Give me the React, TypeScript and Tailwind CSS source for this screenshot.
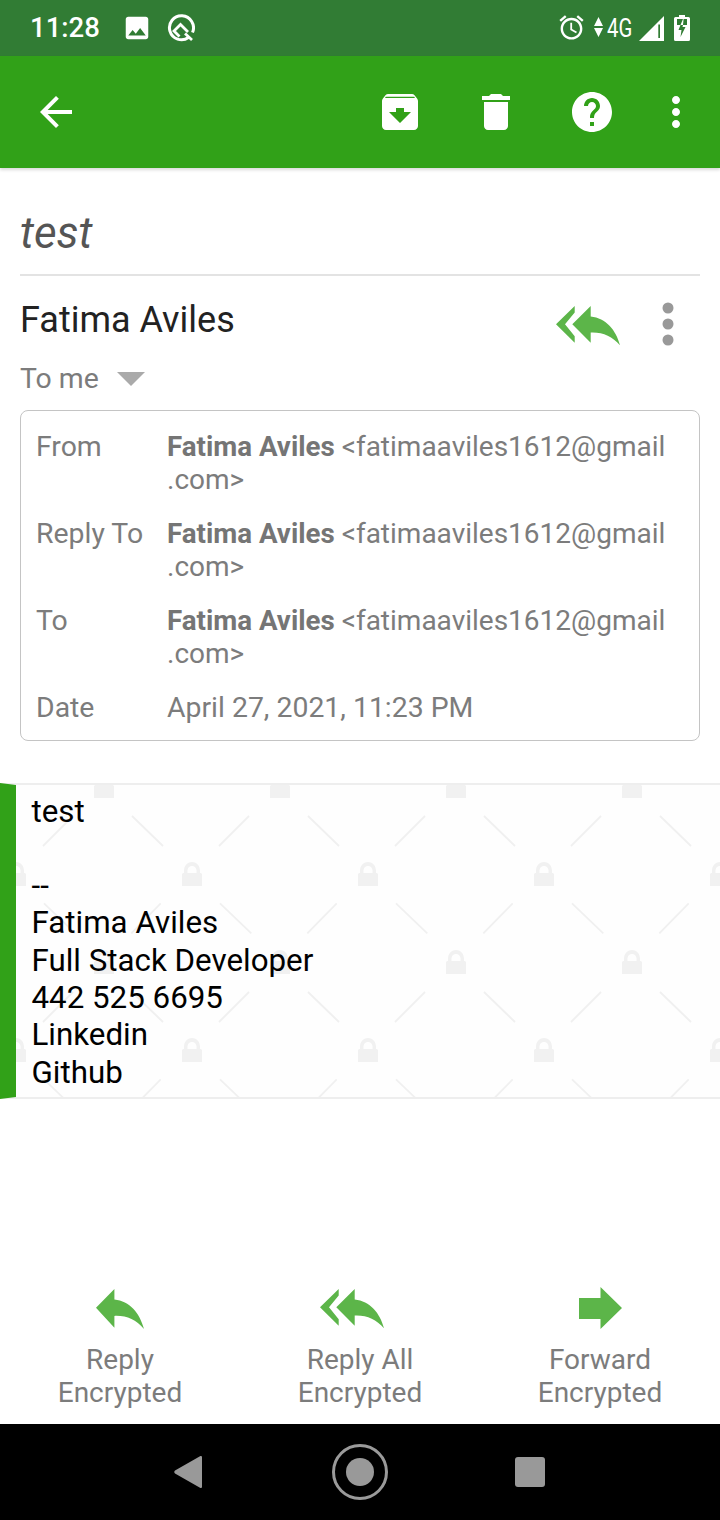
const GREEN = "#5cb549";

function ReplyAllIcon({ className }: { className?: string }) {
  return (
    <svg viewBox="0 0 64 40" className={className} fill={GREEN}>
      <path d="M0 18.3 18.7 0v6.500L9 18.300l9.700 12v6.400z" />
      <path d="M16.300 18.300 34.700 0v10.500C50 12 60 24 64 39.300 56 30 47 26 34.700 26.500v10.200z" />
    </svg>
  );
}

function ReplyIcon({ className }: { className?: string }) {
  return (
    <svg viewBox="0 0 48 40" className={className} fill={GREEN}>
      <path d="M0 18.700 18.400 0v10.500C33.700 12 43.700 24 48 40 39.700 30.400 30.700 26.400 18.400 26.900v11.800z" />
    </svg>
  );
}

function ForwardIcon({ className }: { className?: string }) {
  return (
    <svg viewBox="0 0 43 42" className={className} fill={GREEN}>
      <path d="M0 11h21.500V0L43 21 21.500 42V32H0z" />
    </svg>
  );
}

function Mat({ d, className }: { d: string; className?: string }) {
  return (
    <svg viewBox="0 0 24 24" className={className} fill="currentColor">
      <path d={d} />
    </svg>
  );
}

function StatusBar() {
  return (
    <div className="h-14 shrink-0 bg-[#317c34] text-white flex items-center pl-[30px] pr-[30px]">
      <span className="text-[27.500px] leading-none font-medium w-[92px] font-['Roboto',sans-serif]">11:28</span>
      <Mat
        className="w-[30px] h-[30px]"
        d="M21 19V5c0-1.100-.9-2-2-2H5c-1.100 0-2 .9-2 2v14c0 1.100.9 2 2 2h14c1.100 0 2-.9 2-2zM8.500 13.500l2.500 3.010L14.500 12l4.500 6H5l3.500-4.500z"
      />
      <svg viewBox="0 0 28 28" className="w-7 h-7 ml-[15px]" fill="none" stroke="currentColor" strokeWidth="3">
        <path d="M21.500 23.500A12 12 0 1 1 25.500 18.500" />
        <path d="M21 18 13.500 10.500 7 17l5.500 5.500" strokeWidth="2.800" />
        <path d="M18 19.500l7 6.500" strokeWidth="2.800" />
      </svg>
      <div className="flex-1" />
      <Mat
        className="w-[29px] h-[29px] -mt-[1px]"
        d="M22 5.720l-4.600-3.860-1.290 1.530 4.600 3.860L22 5.720zM7.880 3.390L6.600 1.860 2 5.710l1.290 1.530 4.590-3.850zM12.500 8H11v6l4.750 2.850.75-1.230-4-2.370V8zM12 4c-4.970 0-9 4.030-9 9s4.020 9 9 9c4.970 0 9-4.030 9-9s-4.030-9-9-9zm0 16c-3.870 0-7-3.130-7-7s3.130-7 7-7 7 3.130 7 7-3.130 7-7 7z"
      />
      <svg viewBox="0 0 9 20" className="w-[9px] h-5 ml-2 -mt-[2px]" fill="currentColor">
        <path d="M4.500 0 9 9H0zM0 11h9l-4.500 9z" />
      </svg>
      <span className="w-[32px] ml-[4px] text-[26px] leading-none font-['Roboto',sans-serif] origin-left [transform:scaleX(0.78)]">4G</span>
      <svg viewBox="0 0 25 25" className="w-[25px] h-[25px]">
        <path d="M0 25 25 0v25z" fill="currentColor" />
        <path d="M19.300 8.500H21V22h-1.700z" fill="#317c34" />
      </svg>
      <svg viewBox="0 0 16 26" className="w-4 h-[26px] ml-[10px]">
        <path fill="#ffffff" d="M5 0h6v2h3.500A1.500 1.500 0 0 1 16 3.500V24.500A1.500 1.500 0 0 1 14.500 26H1.500A1.500 1.500 0 0 1 0 24.500V3.500A1.500 1.500 0 0 1 1.500 2H5z" />
        <path fill="#317c34" d="M3 4h10v6H3z" />
        <path fill="#ffffff" d="M9 4 6.500 10H9l.6-6z" />
        <path fill="#317c34" d="M6.500 10 4.500 15H7.500L6.500 22 11.500 12H8.500L9 10z" />
      </svg>
    </div>
  );
}

function Toolbar() {
  return (
    <div className="relative z-10 h-[112px] shrink-0 bg-[#31a118] text-white flex items-center pl-8 pr-5 shadow-[0_2px_3px_rgba(0,0,0,0.15)]">
      <Mat className="w-12 h-12" d="M20 11H7.830l5.590-5.590L12 4l-8 8 8 8 1.410-1.410L7.830 13H20v-2z" />
      <div className="flex-1" />
      <Mat
        className="w-12 h-12"
        d="M20.540 5.230l-1.390-1.680C18.880 3.210 18.470 3 18 3H6c-.47 0-.88.21-1.160.55L3.460 5.230C3.170 5.570 3 6.020 3 6.500V19c0 1.100.9 2 2 2h14c1.100 0 2-.9 2-2V6.500c0-.48-.17-.93-.46-1.270zM12 17.500L6.500 12H10v-2h4v2h3.500L12 17.500zM4.500 5l.4-.6h14.200l.4.6H4.500z"
      />
      <Mat className="w-12 h-12 ml-12" d="M6 19c0 1.100.9 2 2 2h8c1.100 0 2-.9 2-2V7H6v12zM19 4h-3.500l-1-1h-5l-1 1H5v2h14V4z" />
      <Mat
        className="w-12 h-12 ml-12"
        d="M12 2C6.480 2 2 6.480 2 12s4.480 10 10 10 10-4.480 10-10S17.520 2 12 2zm1 17h-2v-2h2v2zm2.070-7.750l-.9.92C13.450 12.900 13 13.500 13 15h-2v-.5c0-1.100.45-2.100 1.170-2.830l1.240-1.260c.37-.36.59-.86.59-1.410 0-1.100-.9-2-2-2s-2 .9-2 2H8c0-2.210 1.790-4 4-4s4 1.790 4 4c0 .88-.36 1.680-.93 2.250z"
      />
      <Mat
        className="w-12 h-12 ml-9"
        d="M12 8c1.100 0 2-.9 2-2s-.9-2-2-2-2 .9-2 2 .9 2 2 2zm0 2c-1.100 0-2 .9-2 2s.9 2 2 2 2-.9 2-2-.9-2-2-2zm0 6c-1.100 0-2 .9-2 2s.9 2 2 2 2-.9 2-2-.9-2-2-2z"
      />
    </div>
  );
}

function DetailRow({ label, children }: { label: string; children: React.ReactNode }) {
  return (
    <div className="flex">
      <div className="w-[131px] shrink-0 text-[#7c7c7c]">{label}</div>
      <div className="text-[#7c7c7c] whitespace-nowrap">{children}</div>
    </div>
  );
}

function Person() {
  return (
    <span className="text-[28px]">
      <span className="font-bold text-[27.700px] text-[#757575]">Fatima Aviles</span> &lt;fatimaaviles1612@gmail
      <br />
      .com&gt;
    </span>
  );
}

function Lock({ x, y }: { x: number; y: number }) {
  return (
    <path
      fillRule="evenodd"
      transform={`translate(${x} ${y})`}
      d="M0 12.500C0 11.500 1 11 2 11V9C2 3 6 0 10 0s8 3 8 9v2c1 0 2 .5 2 1.500V24H0zM5.500 11h9V8.500C14.500 6 12.500 4 10 4S5.500 6 5.500 8.500z"
    />
  );
}

function Pattern() {
  return (
    <svg className="absolute inset-0 w-full h-full" aria-hidden="true">
      <defs>
        <pattern id="locks" patternUnits="userSpaceOnUse" x="440" y="15" width="176" height="176">
          <g fill="#f1f1f1">
            <Lock x={6} y={150} />
            <Lock x={94} y={62} />
          </g>
          <g stroke="#f0f0f0" strokeWidth="1.800" fill="none">
            <path d="M44 16l31 30" />
            <path d="M131 46l30-30" />
            <path d="M43.300 133.300l29.400-30" />
            <path d="M132 103.300l31.300 30" />
          </g>
        </pattern>
      </defs>
      <rect width="100%" height="100%" fill="url(#locks)" />
    </svg>
  );
}

function Message() {
  return (
    <div className="relative mt-[42px] h-[316px] border-y-2 border-[#eeeeee] bg-[#fefefe]">
      <Pattern />
      <div className="absolute left-0 top-[-2px] bottom-[-2px] w-4 bg-[#31a118] [clip-path:polygon(0_0,100%_2px,100%_calc(100%-2px),0_100%)]" />
      <div className="relative pl-[31.500px] pt-[7.500px] text-[31.300px] leading-[37.330px] text-black">
        <div>test</div>
        <div>&nbsp;</div>
        <div>--</div>
        <div>Fatima Aviles</div>
        <div>Full Stack Developer</div>
        <div>442 525 6695</div>
        <div>Linkedin</div>
        <div>Github</div>
      </div>
    </div>
  );
}

function Action({ icon, top, bottom }: { icon: React.ReactNode; top: string; bottom: string }) {
  return (
    <div className="w-60 flex flex-col items-center">
      <div className="h-[42px] flex items-end">{icon}</div>
      <div className="mt-[14px] text-[28px] leading-[33px] text-[#7c7c7c] text-center">
        {top}
        <br />
        {bottom}
      </div>
    </div>
  );
}

function NavBar() {
  return (
    <div className="h-24 shrink-0 bg-black flex items-center pl-[174px]">
      <svg viewBox="0 0 28 32" className="w-7 h-8" fill="#999999">
        <path d="M26 0.300c1-.6 2 0 2 1v29.400c0 1-1 1.600-2 1L1 17.500c-1-.6-1-2.400 0-3z" />
      </svg>
      <svg viewBox="0 0 56 56" className="w-14 h-14 ml-[130px]">
        <circle cx="28" cy="28" r="26.500" fill="none" stroke="#9a9a9a" strokeWidth="3" />
        <circle cx="28" cy="28" r="14" fill="#999999" />
      </svg>
      <div className="w-[30px] h-[30px] rounded-[3px] bg-[#999999] ml-[127px]" />
    </div>
  );
}

export default function App() {
  return (
    <div className="w-[720px] h-[1520px] flex flex-col bg-white overflow-hidden font-['Roboto',sans-serif]">
      <StatusBar />
      <Toolbar />
      <div className="flex-1 flex flex-col">
        <div className="mx-5 mt-[36px] h-[72px] border-b-2 border-[#e3e3e3] text-[44px] leading-[58px] italic text-[#555555]">
          test
        </div>
        <div className="mx-5 mt-[19px] flex items-start h-[50px]">
          <div className="flex-1 text-[36px] leading-[50px] font-['Roboto',sans-serif] text-[#222222]">Fatima Aviles</div>
          <ReplyAllIcon className="w-16 h-10 mt-[11px]" />
          <svg viewBox="0 0 12 44" className="w-3 h-11 ml-[42px] mt-[7px] mr-[26px]" fill="#999999">
            <circle cx="6" cy="6" r="5.500" />
            <circle cx="6" cy="22" r="5.500" />
            <circle cx="6" cy="38" r="5.500" />
          </svg>
        </div>
        <div className="mx-5 mt-[15px] h-[38px] flex items-center">
          <span className="text-[28.400px] leading-[38px] text-[#7c7c7c]">To me</span>
          <svg viewBox="0 0 28 14" className="w-7 h-[14px] ml-[18px]" fill="#aaaaaa">
            <path d="M0 0h28L14 14z" />
          </svg>
        </div>
        <div className="mx-5 mt-[12px] border border-[#c4c4c4] rounded-lg pl-[15px] pt-[19px] pb-4 flex flex-col gap-[21px] text-[28.400px] leading-[33px]">
          <DetailRow label="From">
            <Person />
          </DetailRow>
          <DetailRow label="Reply To">
            <Person />
          </DetailRow>
          <DetailRow label="To">
            <Person />
          </DetailRow>
          <DetailRow label="Date">April 27, 2021, 11:23 PM</DetailRow>
        </div>
        <Message />
        <div className="flex-1" />
        <div className="flex pb-[15px]">
          <Action icon={<ReplyIcon className="w-12 h-10" />} top="Reply" bottom="Encrypted" />
          <Action icon={<ReplyAllIcon className="w-16 h-10 -ml-4" />} top="Reply All" bottom="Encrypted" />
          <Action icon={<ForwardIcon className="w-[43px] h-[42px]" />} top="Forward" bottom="Encrypted" />
        </div>
      </div>
      <NavBar />
    </div>
  );
}
